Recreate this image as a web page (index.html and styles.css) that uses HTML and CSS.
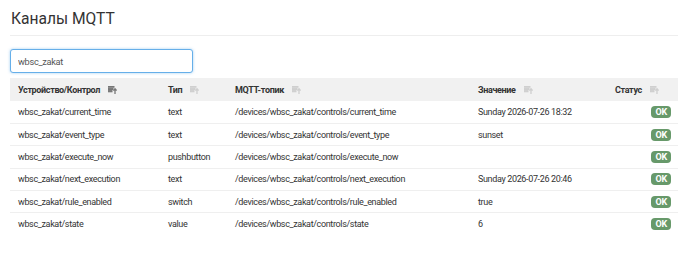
FILE: index.html
```html
<!DOCTYPE html>
<html lang="ru">
<head>
<meta charset="utf-8">
<link rel="stylesheet" href="styles.css">
</head>
<body>
<div class="page">
  <h1 class="title">Каналы MQTT</h1>
  <div class="filter"><input class="search" type="text" value="wbsc_zakat"></div>
  <table class="grid">
    <colgroup>
      <col class="c1"><col class="c2"><col class="c3"><col class="c4"><col class="c5">
    </colgroup>
    <thead>
      <tr>
        <th><span class="hd">Устройство/Контрол <svg class="sort active" viewBox="0 0 9 8" width="9" height="8"><rect x="0" y="0" width="6" height="1.2"/><rect x="0" y="2.3" width="5" height="1.2"/><rect x="0" y="4.6" width="4" height="1.2"/><path d="M7 8V3.2M5.4 4.6L7 2.8L8.6 4.6" fill="none" stroke-width="1.3"/></svg></span></th>
        <th><span class="hd">Тип <svg class="sort" viewBox="0 0 9 8" width="9" height="8"><rect x="0" y="0" width="6" height="1.2"/><rect x="0" y="2.3" width="5" height="1.2"/><rect x="0" y="4.6" width="4" height="1.2"/><path d="M7 8V3.2M5.4 4.6L7 2.8L8.6 4.6" fill="none" stroke-width="1.3"/></svg></span></th>
        <th><span class="hd">MQTT-топик <svg class="sort" viewBox="0 0 9 8" width="9" height="8"><rect x="0" y="0" width="6" height="1.2"/><rect x="0" y="2.3" width="5" height="1.2"/><rect x="0" y="4.6" width="4" height="1.2"/><path d="M7 8V3.2M5.4 4.6L7 2.8L8.6 4.6" fill="none" stroke-width="1.3"/></svg></span></th>
        <th><span class="hd">Значение <svg class="sort" viewBox="0 0 9 8" width="9" height="8"><rect x="0" y="0" width="6" height="1.2"/><rect x="0" y="2.3" width="5" height="1.2"/><rect x="0" y="4.6" width="4" height="1.2"/><path d="M7 8V3.2M5.4 4.6L7 2.8L8.6 4.6" fill="none" stroke-width="1.3"/></svg></span></th>
        <th><span class="hd">Статус <svg class="sort" viewBox="0 0 9 8" width="9" height="8"><rect x="0" y="0" width="6" height="1.2"/><rect x="0" y="2.3" width="5" height="1.2"/><rect x="0" y="4.6" width="4" height="1.2"/><path d="M7 8V3.2M5.4 4.6L7 2.8L8.6 4.6" fill="none" stroke-width="1.3"/></svg></span></th>
      </tr>
    </thead>
    <tbody>
      <tr><td>wbsc_zakat/current_time</td><td>text</td><td>/devices/wbsc_zakat/controls/current_time</td><td>Sunday 2026-07-26 18:32</td><td class="st"><span class="ok">OK</span></td></tr>
      <tr><td>wbsc_zakat/event_type</td><td>text</td><td>/devices/wbsc_zakat/controls/event_type</td><td>sunset</td><td class="st"><span class="ok">OK</span></td></tr>
      <tr><td>wbsc_zakat/execute_now</td><td>pushbutton</td><td>/devices/wbsc_zakat/controls/execute_now</td><td></td><td class="st"><span class="ok">OK</span></td></tr>
      <tr><td>wbsc_zakat/next_execution</td><td>text</td><td>/devices/wbsc_zakat/controls/next_execution</td><td>Sunday 2026-07-26 20:46</td><td class="st"><span class="ok">OK</span></td></tr>
      <tr><td>wbsc_zakat/rule_enabled</td><td>switch</td><td>/devices/wbsc_zakat/controls/rule_enabled</td><td>true</td><td class="st"><span class="ok">OK</span></td></tr>
      <tr><td>wbsc_zakat/state</td><td>value</td><td>/devices/wbsc_zakat/controls/state</td><td>6</td><td class="st"><span class="ok">OK</span></td></tr>
    </tbody>
  </table>
</div>
</body>
</html>
```

FILE: styles.css
```css
* { box-sizing: border-box; }
html, body { margin: 0; background: #fff; }
body {
  font-family: Roboto, "Liberation Sans", sans-serif;
  font-size: 9px;
  letter-spacing: -0.35px;
  color: #333;
}
.page {
  padding: 0 12px 0 10px;
}
.title {
  margin: 0;
  padding: 10px 0 6px 1px;
  font-size: 15.6px;
  font-weight: 400;
  letter-spacing: 0;
  line-height: 19px;
  color: #333;
  border-bottom: 1px solid #eee;
}
.filter {
  padding-top: 13px;
  padding-bottom: 5px;
}
.search {
  display: block;
  width: 183px;
  height: 24px;
  padding: 0 7px;
  font-family: inherit;
  font-size: 9.2px;
  letter-spacing: -0.3px;
  color: #555;
  border: 1px solid #66afe9;
  border-radius: 3px;
  box-shadow: 0 0 3px rgba(102, 175, 233, 0.6);
  outline: none;
}
.grid {
  width: 668px;
  border-collapse: collapse;
  table-layout: fixed;
}
.c1 { width: 150px; }
.c2 { width: 67px; }
.c3 { width: 243px; }
.c4 { width: 137px; }
.c5 { width: 71px; }
.grid th {
  background: #f1f1f1;
  height: 23px;
  padding: 0 8px;
  text-align: left;
  font-weight: 700;
  font-size: 9px;
  color: #333;
}
.hd {
  display: inline-flex;
  align-items: center;
  gap: 8px;
  white-space: nowrap;
}
.sort { fill: #cfcfcf; stroke: #cfcfcf; }
.sort.active { fill: #777; stroke: #777; }
.grid td {
  height: 22.4px;
  padding: 0 8px;
  border-top: 1px solid #efefef;
  white-space: nowrap;
  overflow: hidden;
}
.grid tbody tr:first-child td { border-top: none; }
.grid td.st { text-align: right; padding-right: 7px; }
.ok {
  display: inline-block;
  background: #67996a;
  color: #fff;
  font-weight: 700;
  font-size: 9px;
  letter-spacing: -0.2px;
  line-height: 12px;
  height: 12px;
  padding: 0 4px;
  border-radius: 4px;
  vertical-align: middle;
}
```
